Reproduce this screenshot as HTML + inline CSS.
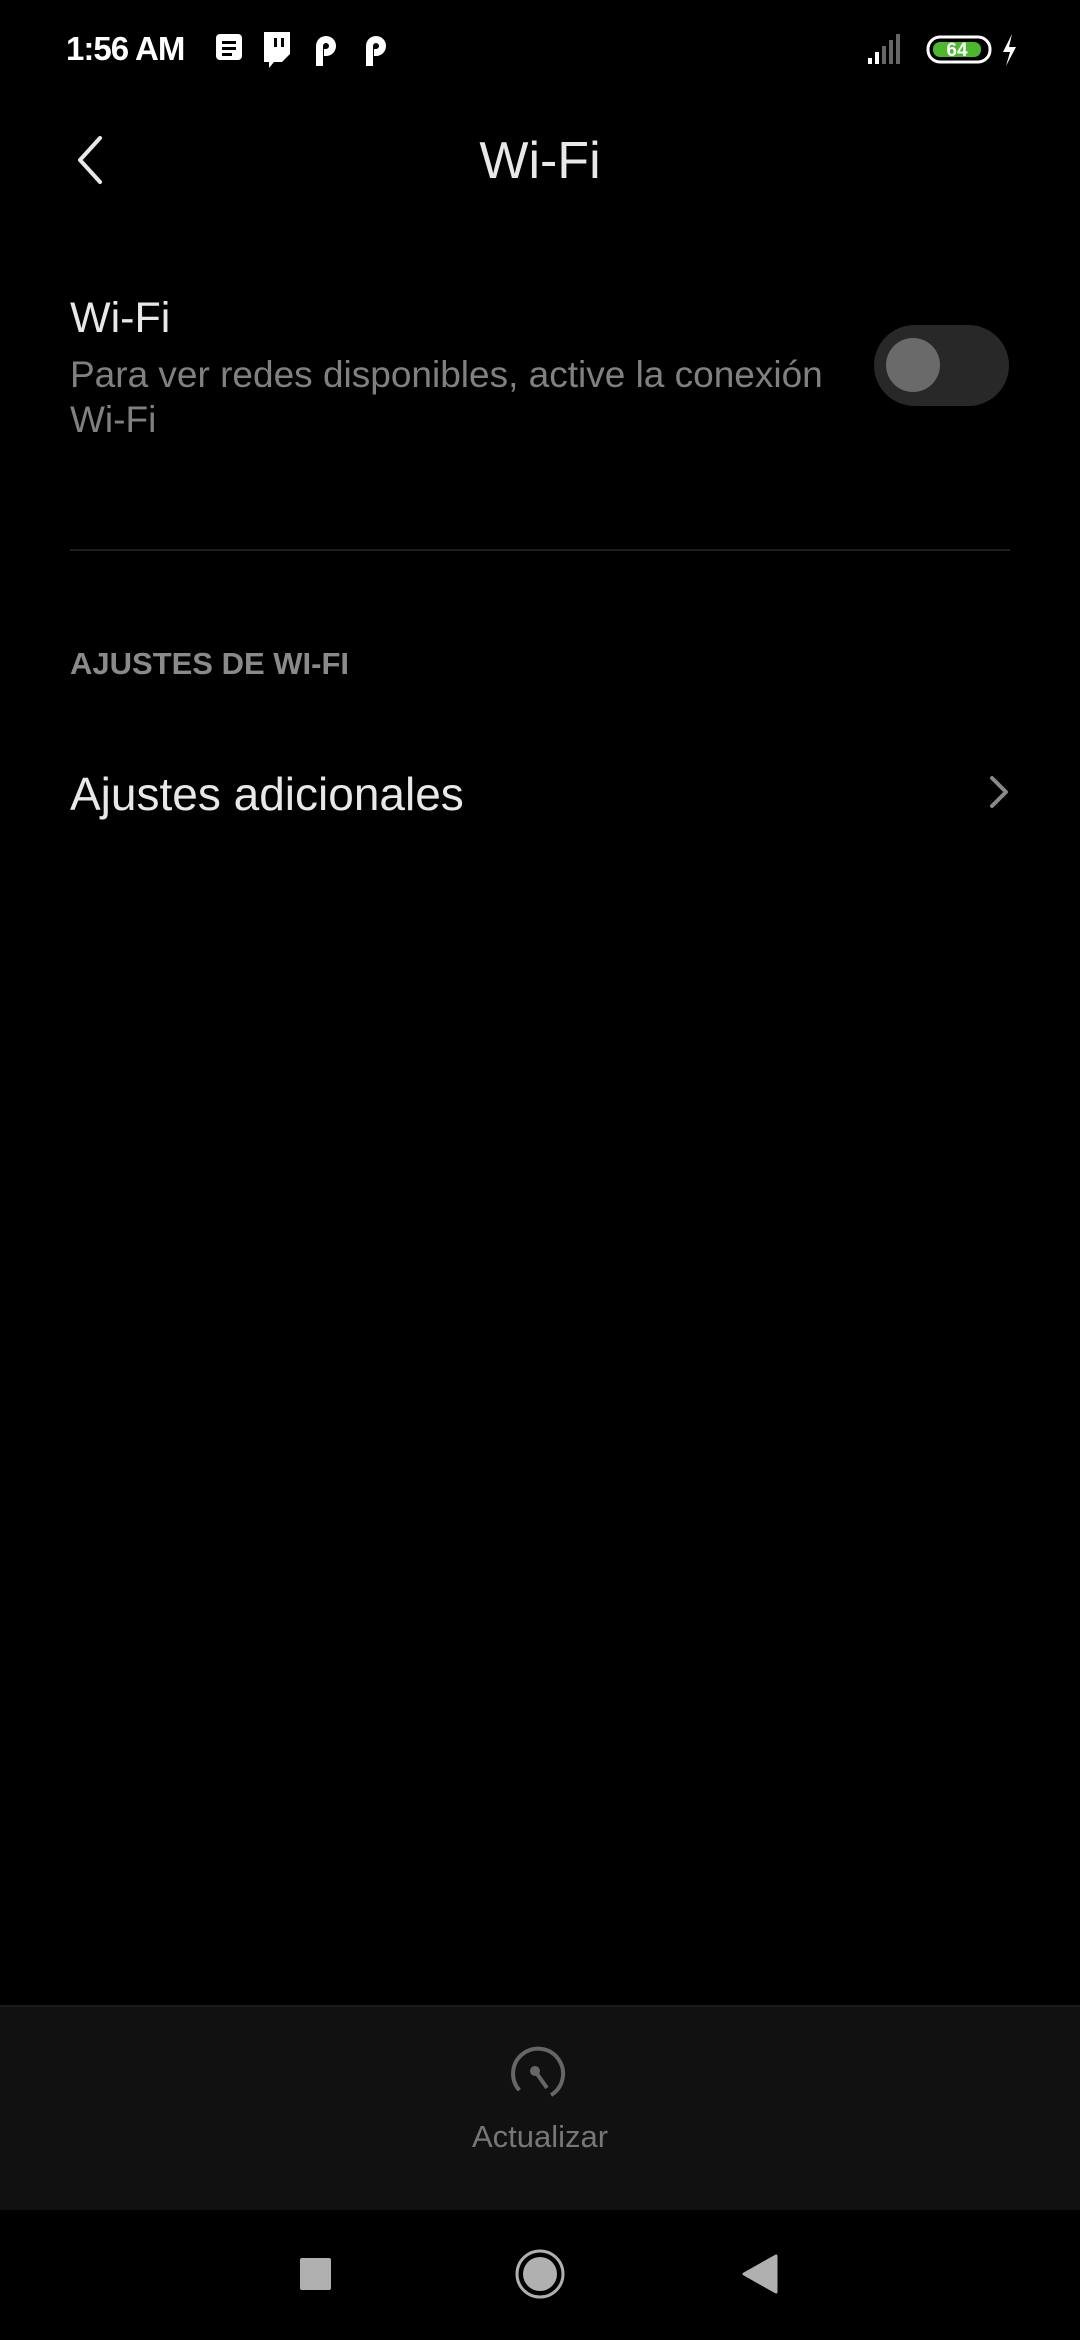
<!DOCTYPE html>
<html><head><meta charset="utf-8"><style>
body{margin:0;width:1080px;height:2340px;background:#000;position:relative;overflow:hidden;font-family:"Liberation Sans",sans-serif;}
.a{position:absolute;white-space:nowrap;}
</style></head><body>
<div class="a" style="left:66px;top:30px;font-size:33px;color:#fff;font-weight:bold;letter-spacing:-1px">1:56 AM</div>
<svg class="a" style="left:214px;top:30px" width="180" height="40" viewBox="0 0 180 40">
<rect x="2" y="4" width="26" height="26" rx="4" fill="#fff"/><rect x="8" y="11" width="14" height="3" fill="#000"/><rect x="8" y="17" width="14" height="3" fill="#000"/><rect x="8" y="23" width="10" height="3" fill="#000"/>
<path d="M50 2h26v22l-8 8h-8l-5 6v-6h-5z" fill="#fff"/><rect x="60" y="8" width="3" height="9" fill="#000"/><rect x="67" y="8" width="3" height="9" fill="#000"/>
<path d="M102 36V16a10 10 0 1 1 10 10h-2v-7h2a3 3 0 1 0-3-3v20z" fill="#fff"/>
<path d="M152 36V16a10 10 0 1 1 10 10h-2v-7h2a3 3 0 1 0-3-3v20z" fill="#fff"/>
</svg>
<svg class="a" style="left:866px;top:30px" width="160" height="40" viewBox="0 0 160 40">
<rect x="2" y="28" width="4" height="6" fill="#fff"/><rect x="9" y="22" width="4" height="12" fill="#fff"/><rect x="16" y="16" width="4" height="18" fill="#666"/><rect x="23" y="10" width="4" height="24" fill="#666"/><rect x="30" y="4" width="4" height="30" fill="#666"/>
<rect x="62" y="7" width="62" height="25" rx="12" fill="none" stroke="#fff" stroke-width="3"/>
<rect x="67" y="12" width="48" height="15" rx="7" fill="#4cb82e"/>
<text x="91" y="26" font-size="19" font-weight="bold" fill="#fff" text-anchor="middle" font-family="Liberation Sans">64</text>
<path d="M146 4l-9 18h7l-4 14 10-19h-7z" fill="#fff"/>
</svg>
<svg class="a" style="left:70px;top:134px" width="40" height="52"><path d="M30 4L10 26l20 22" fill="none" stroke="#e8e8e8" stroke-width="4" stroke-linecap="round" stroke-linejoin="round"/></svg>
<div class="a" style="left:0;width:1080px;text-align:center;top:131px;font-size:52px;color:#e8e8e8">Wi-Fi</div>
<div class="a" style="left:70px;top:294px;font-size:43px;color:#e8e8e8">Wi-Fi</div>
<div class="a" style="left:70px;top:352px;font-size:37px;color:#808080;line-height:45px">Para ver redes disponibles, active la conexión<br>Wi-Fi</div>
<div class="a" style="left:874px;top:325px;width:135px;height:81px;border-radius:41px;background:#282828"></div>
<div class="a" style="left:886px;top:338px;width:54px;height:54px;border-radius:50%;background:#6a6a6a"></div>
<div class="a" style="left:70px;top:549px;width:940px;height:2px;background:#1e1e1e"></div>
<div class="a" style="left:70px;top:646px;font-size:31px;color:#8a8a8a;font-weight:bold">AJUSTES DE WI-FI</div>
<div class="a" style="left:70px;top:767px;font-size:46px;color:#e8e8e8">Ajustes adicionales</div>
<svg class="a" style="left:984px;top:772px" width="30" height="40"><path d="M8 6l14 14-14 14" fill="none" stroke="#888" stroke-width="4" stroke-linecap="round" stroke-linejoin="round"/></svg>
<div class="a" style="left:0;top:2005px;width:1080px;height:203px;background:#111;border-top:2px solid #1a1a1a"></div>
<svg class="a" style="left:510px;top:2046px" width="60" height="60" viewBox="0 0 60 60"><path d="M32 55A25 25 0 1 1 52 30" fill="none" stroke="#666" stroke-width="4" transform="rotate(60 30 30)"/><circle cx="25" cy="25" r="5" fill="#666"/><path d="M25 25l12 17" stroke="#666" stroke-width="4"/></svg>
<div class="a" style="left:0;width:1080px;text-align:center;top:2119px;font-size:31px;color:#777">Actualizar</div>
<div class="a" style="left:300px;top:2258px;width:31px;height:32px;border-radius:2px;background:#b0b0b0"></div>
<svg class="a" style="left:512px;top:2246px" width="56" height="56"><circle cx="28" cy="28" r="23" fill="none" stroke="#b0b0b0" stroke-width="3"/><circle cx="28" cy="28" r="17" fill="#b0b0b0"/></svg>
<svg class="a" style="left:740px;top:2254px" width="40" height="40"><path d="M36 2v36L4 20z" fill="#b0b0b0" stroke="#b0b0b0" stroke-linejoin="round" stroke-width="3"/></svg>
</body></html>
